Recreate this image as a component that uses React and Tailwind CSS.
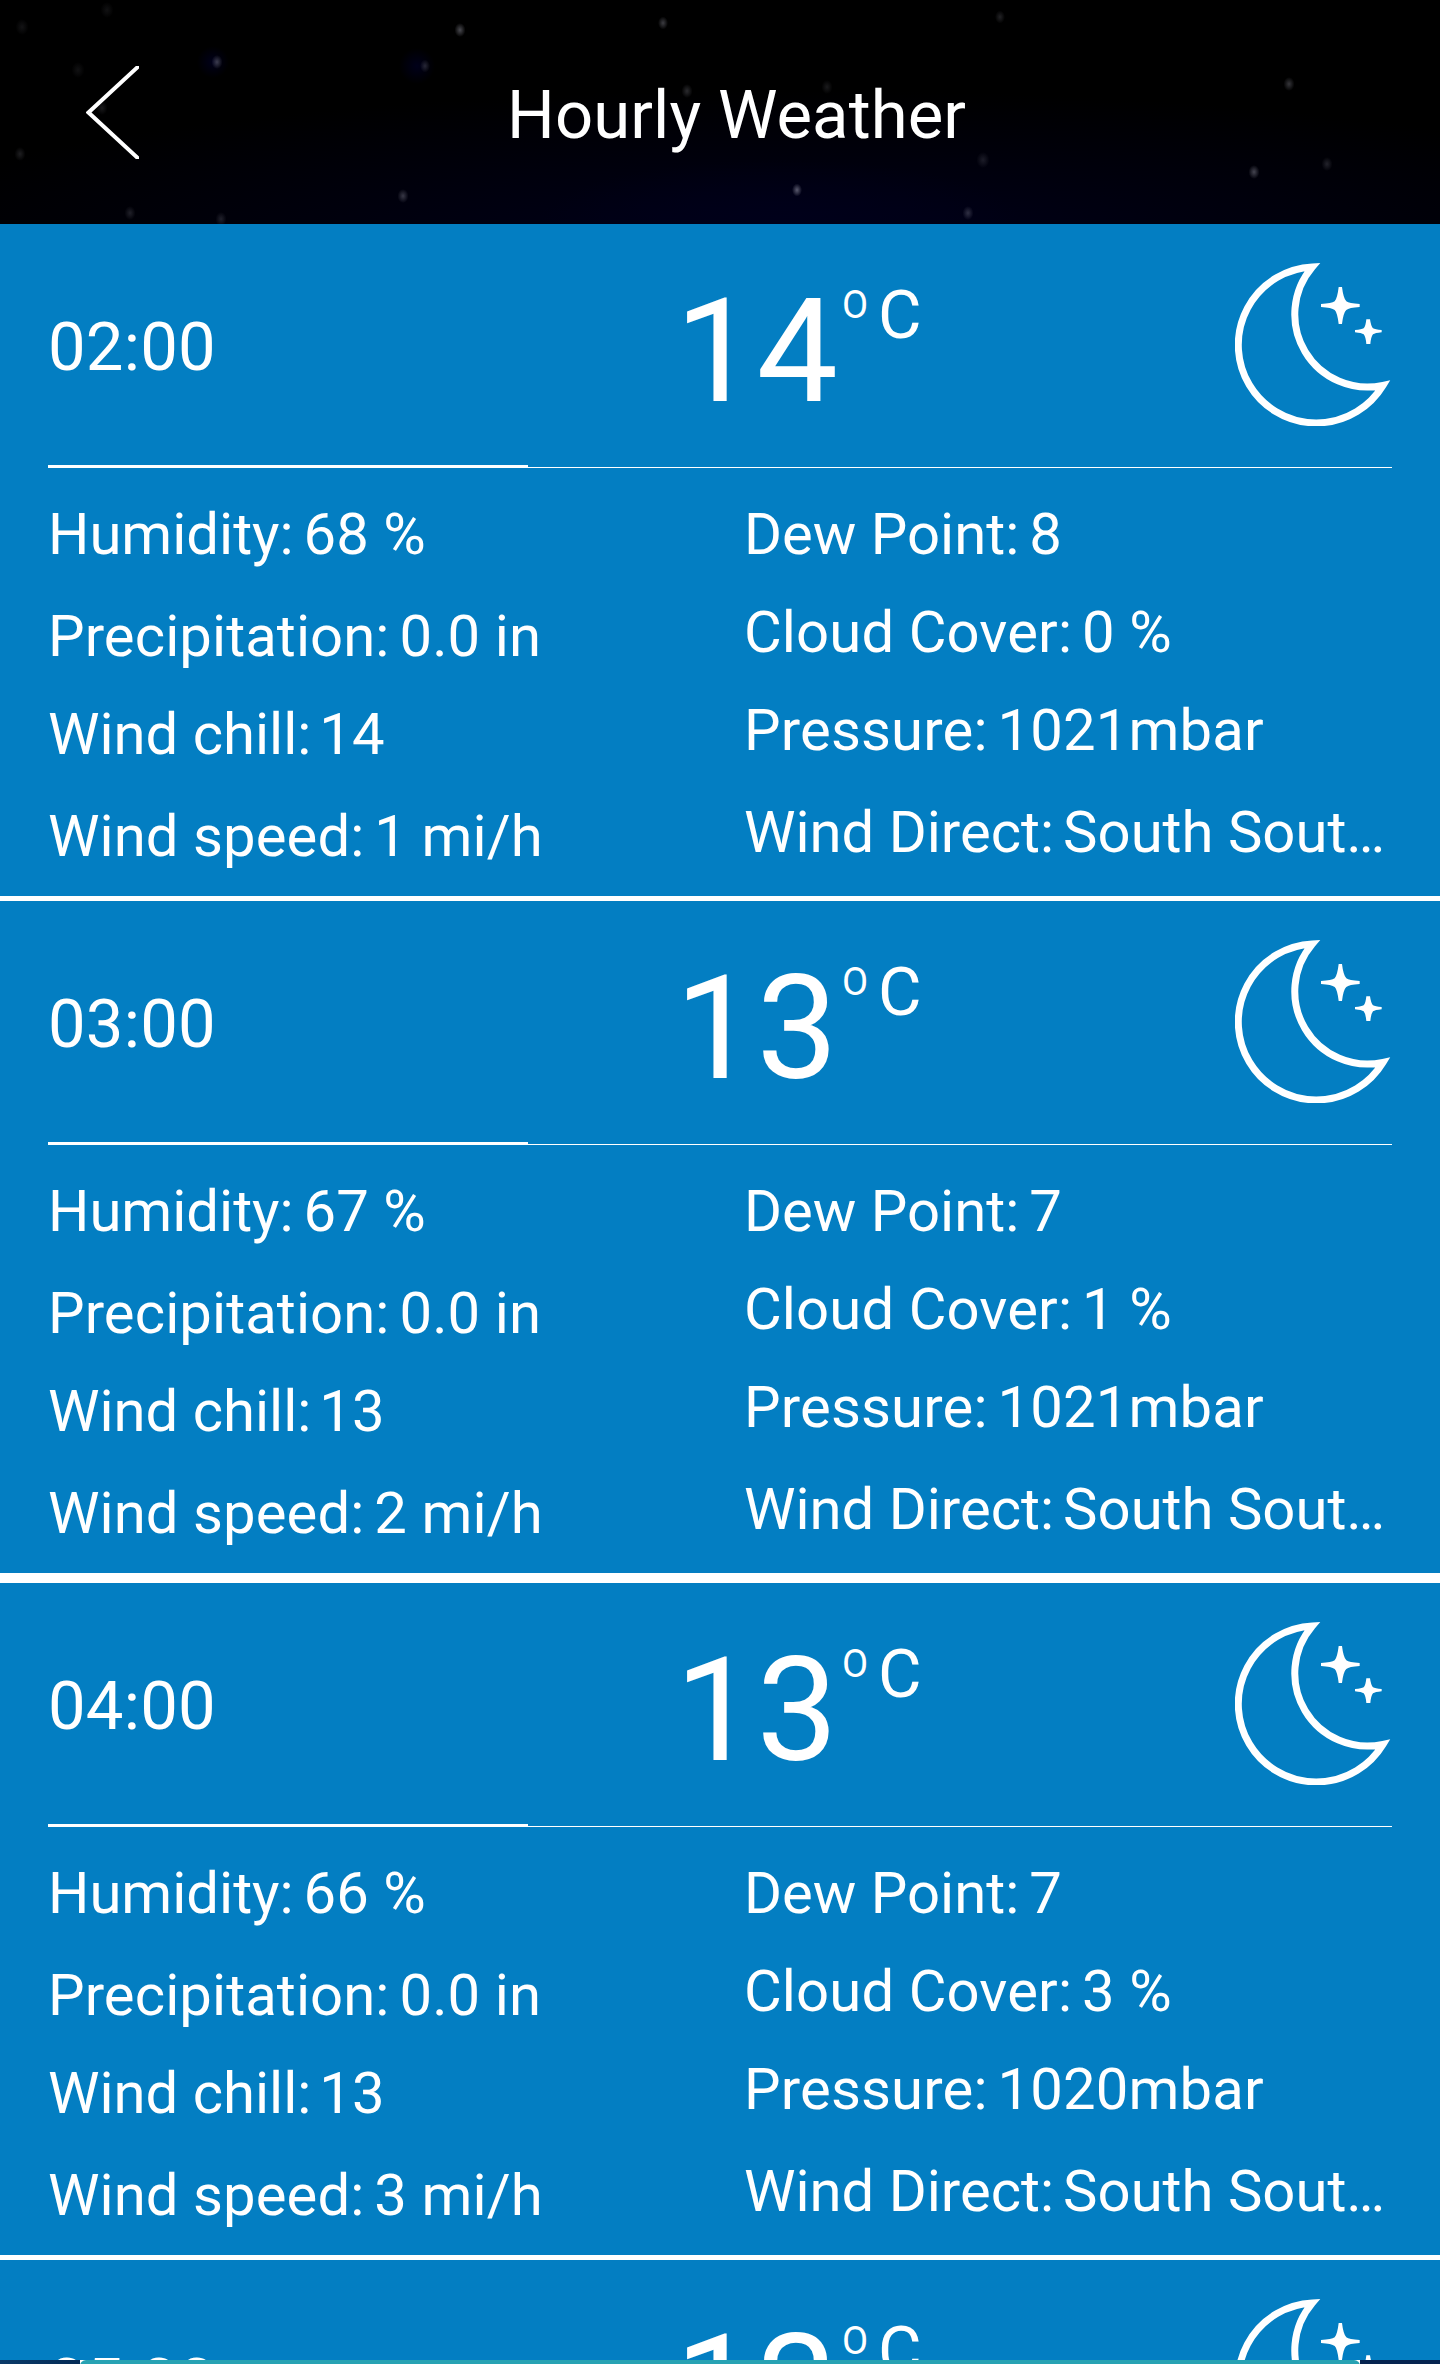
const hours = [
  { time: "02:00", temp: "14", humidity: "68 %", precip: "0.0 in", chill: "14", speed: "1 mi/h", dew: "8", cloud: "0 %", pressure: "1021mbar", direct: "South Sout…" },
  { time: "03:00", temp: "13", humidity: "67 %", precip: "0.0 in", chill: "13", speed: "2 mi/h", dew: "7", cloud: "1 %", pressure: "1021mbar", direct: "South Sout…" },
  { time: "04:00", temp: "13", humidity: "66 %", precip: "0.0 in", chill: "13", speed: "3 mi/h", dew: "7", cloud: "3 %", pressure: "1020mbar", direct: "South Sout…" },
];

// The next hour, of which only the top is scrolled into view
const nextHour = { time: "05:00", temp: "13" };

// x, y, radius, opacity of each star in the header sky
const stars = [
  [460, 30, 4, 0.34], [217, 62, 4, 0.28], [425, 66, 3.5, 0.18], [663, 23, 3.5, 0.28],
  [687, 91, 4, 0.2], [403, 196, 4, 0.26], [130, 213, 4, 0.15], [221, 219, 4, 0.15],
  [20, 154, 4, 0.14], [22, 27, 5, 0.09], [107, 10, 5, 0.08], [78, 70, 5, 0.08],
  [102, 108, 4, 0.12], [1000, 17, 3.5, 0.16], [1289, 84, 4, 0.25], [1254, 172, 4, 0.32],
  [1327, 164, 4, 0.16], [797, 190, 3.5, 0.42], [968, 213, 4, 0.22], [983, 160, 5, 0.13],
  [827, 87, 4, 0.12],
];

function Sky() {
  return (
    <svg className="absolute inset-0 h-full w-full" viewBox="0 0 1440 224" aria-hidden="true">
      <defs>
        <radialGradient id="glow">
          <stop offset="0" stopColor="#00001a" />
          <stop offset="1" stopColor="#00001a" stopOpacity="0" />
        </radialGradient>
        <radialGradient id="star">
          <stop offset="0" stopColor="#d8d8ea" />
          <stop offset="1" stopColor="#d8d8ea" stopOpacity="0" />
        </radialGradient>
      </defs>
      <ellipse cx="800" cy="240" rx="950" ry="150" fill="url(#glow)" />
      <ellipse cx="780" cy="220" rx="240" ry="60" fill="url(#glow)" />
      <circle cx="213" cy="62" r="16" fill="url(#glow)" />
      <circle cx="417" cy="66" r="18" fill="url(#glow)" />
      {stars.map(([x, y, r, o]) => (
        <ellipse key={`${x}-${y}`} cx={x} cy={y} rx={r + 1.5} ry={r + 3} fill="url(#star)" opacity={o} />
      ))}
    </svg>
  );
}

function Moon() {
  return (
    <svg className="mr-px h-[163px] w-[156px]" viewBox="0 0 468 489" fill="none" aria-hidden="true">
      <path
        d="M232 12 A234 234 0 1 0 444 367 A218 218 0 0 1 232 12 Z"
        stroke="white"
        strokeWidth="21"
        strokeMiterlimit="10"
      />
      <path
        d="M311 72 h10 Q325 106 334 115 Q342 121 374 123 v9 Q342 134 334 141 Q325 149 321 183 h-10 Q307 149 299 141 Q290 134 258 132 v-9 Q290 121 299 115 Q307 106 311 72 Z"
        fill="white"
      />
      <path
        d="M394 169 h11 Q408 190 414 196 Q420 200 440 201 v7 Q420 210 414 214 Q408 221 406 243 h-12 Q392 221 386 214 Q380 210 360 208 v-7 Q380 200 386 196 Q392 190 394 169 Z"
        fill="white"
      />
    </svg>
  );
}

function Detail({ label, value, gap = "ml-[10px]", className = "" }) {
  return (
    <div className={`flex h-[68px] items-center whitespace-nowrap ${className}`}>
      <span>{label}:</span>
      <span className={gap}>{value}</span>
    </div>
  );
}

function CardTop({ hour }) {
  return (
    <div className="flex h-[241px] items-center">
      <div className="w-[627px] pt-[5px] text-[67px] leading-[80px] tracking-[0.2px]">{hour.time}</div>
      <div className="flex h-full flex-1 items-start">
        <span className="mt-[42px] w-[167px] text-[145px] leading-[170px]">{hour.temp}</span>
        <span className="mt-[57px] w-[36px] text-[38px] leading-[48px]">O</span>
        <span className="mt-[51px] text-[67px] leading-[80px]">C</span>
      </div>
      <Moon />
    </div>
  );
}

function HourCard({ hour }) {
  return (
    <section className="h-[672px] shrink-0 bg-[#037ec2] px-12">
      <CardTop hour={hour} />
      <div className="flex h-[3px] items-end">
        <div className="h-[3px] w-[480px] bg-white" />
        <div className="h-px flex-1 bg-white" />
      </div>
      <div className="flex pt-8 text-[58px] leading-[68px]">
        <div className="w-[696px]">
          <Detail label="Humidity" value={hour.humidity} />
          <Detail label="Precipitation" value={hour.precip} className="mt-[34px] tracking-[0.08px]" />
          <Detail label="Wind chill" value={hour.chill} gap="ml-[8px]" className="mt-[30px]" />
          <Detail label="Wind speed" value={hour.speed} className="mt-[34px] tracking-[0.08px]" />
        </div>
        <div className="flex-1">
          <Detail label="Dew Point" value={hour.dew} />
          <Detail label="Cloud Cover" value={hour.cloud} className="mt-[30px] tracking-[0.12px]" />
          <Detail label="Pressure" value={hour.pressure} className="mt-[30px] tracking-[0.15px]" />
          <Detail label="Wind Direct" value={hour.direct} gap="ml-[9px]" className="mt-[34px]" />
        </div>
      </div>
    </section>
  );
}

export default function App() {
  return (
    <div className="flex h-[2364px] w-[1440px] flex-col overflow-hidden bg-white font-['Roboto',sans-serif] text-white">
      <header className="relative flex h-[224px] shrink-0 items-center bg-black">
        <Sky />
        <svg className="relative ml-[86px] h-[93px] w-[53px]" viewBox="0 0 53 93" fill="none" aria-label="Back">
          <path d="M55 -2 L2.5 46.5 L55 95" stroke="white" strokeWidth="4" />
        </svg>
        <h1 className="relative ml-[368px] pt-[6px] text-[67px] leading-[80px] tracking-[0.1px]">Hourly Weather</h1>
      </header>
      <main className="flex h-[2136px] shrink-0 flex-col overflow-hidden">
        <HourCard hour={hours[0]} />
        <div className="h-[5px] shrink-0" />
        <HourCard hour={hours[1]} />
        <div className="h-[10px] shrink-0" />
        <HourCard hour={hours[2]} />
        <div className="h-[5px] shrink-0" />
        <section className="h-[100px] shrink-0 overflow-hidden bg-[#037ec2] px-12">
          <CardTop hour={nextHour} />
        </section>
      </main>
      <footer className="flex h-1 shrink-0 overflow-hidden">
        <div className="w-20 bg-linear-to-r from-[#0b3a68] to-[#032a55]" />
        <div className="h-2 w-[1280px] rounded-t-[6px] bg-[#27a2b3]" />
        <div className="flex-1 bg-[#04234f]" />
      </footer>
    </div>
  );
}
